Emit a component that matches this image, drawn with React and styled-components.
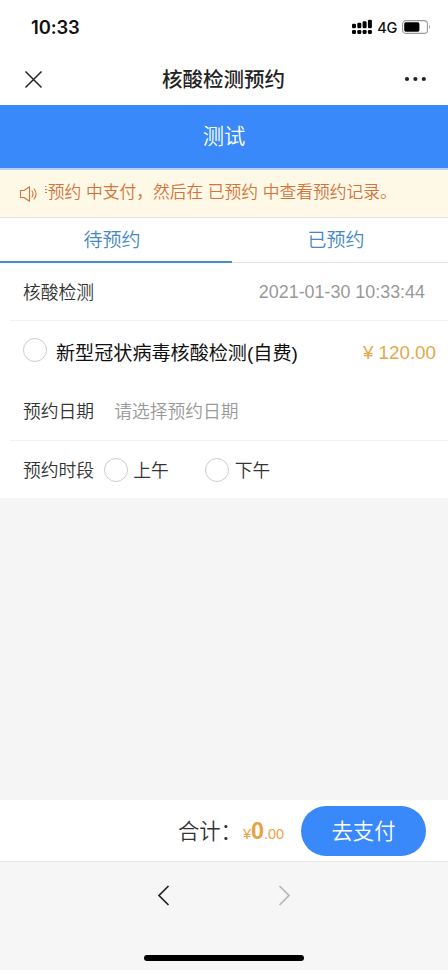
import styled, { createGlobalStyle } from 'styled-components'

const GlobalStyle = createGlobalStyle`
    * {
        box-sizing: border-box;
    }

    body {
        margin: 0;
        background: #f6f6f6;
        font-family: "Liberation Sans", "Noto Sans CJK SC", sans-serif;
        color: #333;
    }

    svg {
        display: block;
        flex: none;
    }
`

const Pagina = styled.div`
    display: flex;
    flex-direction: column;
    width: 448px;
    height: 970px;
    overflow: hidden;
    white-space: nowrap;
`

const StatusBar = styled.div`
    display: flex;
    align-items: center;
    height: 53px;
    padding: 1px 17px 0 31px;
    background: #fff;
    color: #111;
`

const Hora = styled.span`
    flex: 1;
    font: 600 18.4px/24px Inter, sans-serif;
    letter-spacing: -0.1px;
`

const Red = styled.span`
    margin: 1px 5px 0 5px;
    font: 500 14.5px/20px Inter, sans-serif;
    letter-spacing: -0.3px;
`

const NavBar = styled.header`
    display: grid;
    grid-template-columns: 54px 1fr 60px;
    align-items: center;
    height: 52px;
    padding: 0 10px 0 15px;
    background: #fff;
`

const NavTitulo = styled.h1`
    margin: 0;
    padding-top: 2px;
    font-size: 20.5px;
    font-weight: 500;
    line-height: 30px;
    text-align: center;
    color: #222;
`

const NavLado = styled.div`
    display: flex;
    justify-content: ${({ $fin }) => ($fin ? 'flex-end' : 'flex-start')};
    padding: ${({ $fin }) => ($fin ? '0 11px 0 0' : '0 0 0 9px')};
`

const Banner = styled.div`
    height: 65px;
    border-bottom: 2px solid #b5d0f0;
    background: #3989fb;
    color: #fff;
    font-size: 21.3px;
    font-weight: 350;
    line-height: 65px;
    text-align: center;
`

const Aviso = styled.div`
    display: flex;
    align-items: center;
    height: 47px;
    padding: 0 12px 0 19px;
    background: #fef8e6;
    color: #d3743b;
`

const AvisoVentana = styled.div`
    flex: 1;
    margin-left: 7px;
    overflow: hidden;
    font-size: 16.75px;
    font-weight: 350;
    line-height: 40px;
    margin-top: -2px;
`

const AvisoTexto = styled.div`
    margin-left: -14px;
`

const Tabs = styled.div`
    display: flex;
    height: 46px;
    border-top: 1px solid #e6e6e6;
    border-bottom: 1px solid #e2e4e6;
    background: #fff;
`

const Tab = styled.div`
    flex: 1;
    color: #4388c8;
    font-size: 19px;
    font-weight: 350;
    line-height: 46px;
    text-align: center;
`

const TabLinea = styled.div`
    width: 232px;
    height: 2px;
    margin-top: -2px;
    background: #4690cb;
    z-index: 1;
`

const Celda = styled.div`
    display: flex;
    align-items: center;
    height: ${({ $alto }) => $alto}px;
    padding: 0 22px 0 23px;
    background: #fff;
    font-size: 17.8px;
    font-weight: 350;
`

const Texto = styled.span`
    padding-bottom: 2px;
`

const Separador = styled.div`
    height: 1px;
    background: linear-gradient(to right, #fff 10px, #f1f1f1 10px);
`

const Fecha = styled.span`
    margin: 1px 1px 0 auto;
    color: #999;
    font-size: 17.9px;
`

const Radio = styled.span`
    flex: none;
    width: 24px;
    height: 24px;
    margin: ${({ $margen }) => $margen || '0'};
    border: 1.5px solid #ccc;
    border-radius: 50%;
    background: #fff;
`

const Producto = styled.span`
    color: #111;
    font-size: 19.1px;
    font-weight: 400;
    margin-top: 1px;
`

const Precio = styled.span`
    margin: 2px -10px 0 auto;
    color: #e3a94c;
    font-size: 18.8px;
`

const Placeholder = styled.span`
    margin-left: 20px;
    padding-bottom: 2px;
    color: #999;
`

const Relleno = styled.div`
    height: 302px;
    background: #f5f5f5;
`

const BarraPago = styled.div`
    display: flex;
    align-items: center;
    justify-content: flex-end;
    height: 61px;
    padding: 1px 22px 0 0;
    background: #fff;
`

const TotalLabel = styled.span`
    margin-right: 1px;
    padding-bottom: 3px;
    font-size: 21.3px;
    font-weight: 350;
`

const Total = styled.span`
    margin: 0 17px 0 0;
    color: #e9a144;
    font-size: 14.4px;

    b {
        font-size: 23.5px;
        font-weight: 700;
    }
`

const BotonPagar = styled.button`
    width: 125px;
    height: 50px;
    padding: 0 0 4px;
    border: 0;
    border-radius: 25px;
    background: #3989fb;
    color: #fff;
    font-family: inherit;
    font-size: 21.3px;
    font-weight: 350;
`

const Navegador = styled.footer`
    display: flex;
    flex-direction: column;
    align-items: center;
    justify-content: space-between;
    height: 109px;
    padding: 23px 0 9px;
    border-top: 1px solid #e8e8e8;
    background: #f6f6f6;
`

const Flechas = styled.div`
    display: flex;
    gap: 108px;
`

const Indicador = styled.div`
    width: 160px;
    height: 6px;
    border-radius: 3px;
    background: #000;
`

// alturas de las cuatro barras de señal
const senal = [4.5, 5.5, 7, 8.5]

const Senal = () => (
    <svg width="20" height="16" viewBox="0 0 20 16" fill="#000">
        {senal.map((alto, i) => (
            <g key={alto}>
                <rect x={i * 5.3} y={9.3 - alto} width="4" height={alto} rx="1.3" />
                <rect x={i * 5.3} y="11" width="4" height="4" rx="1.3" />
            </g>
        ))}
    </svg>
)

const Bateria = () => (
    <svg width="29" height="14" viewBox="0 0 29 14">
        <rect x="0.6" y="0.6" width="24.8" height="12.8" rx="3.2" fill="none" stroke="#999" strokeWidth="1.1" />
        <rect x="2.2" y="2.3" width="15.2" height="9.4" rx="1.6" fill="#000" />
        <path d="M27 4.8c1.3.5 1.3 3.9 0 4.4z" fill="#aaa" />
    </svg>
)

const Altavoz = () => (
    <svg width="19" height="18" viewBox="0 0 19 18" fill="none" stroke="#d3743b" strokeWidth="1.1">
        <path d="M1.5 5.5H5L10.5 1.7V16.3L5 12.5H1.5Z" strokeLinejoin="round" />
        <path d="M13 6Q15 9 13 12M15.2 4Q19 9 15.2 14" strokeLinecap="round" />
    </svg>
)

const App = () => {

    return (
        <>
            <GlobalStyle />
            <Pagina>
                <StatusBar>
                    <Hora>10:33</Hora>
                    <Senal />
                    <Red>4G</Red>
                    <Bateria />
                </StatusBar>
                <NavBar>
                    <NavLado>
                        <svg width="19" height="19" viewBox="0 0 19 19" stroke="#222" strokeWidth="1.5">
                            <path d="M1.5 1.5L17.5 17.5M17.5 1.5L1.5 17.5" />
                        </svg>
                    </NavLado>
                    <NavTitulo>核酸检测预约</NavTitulo>
                    <NavLado $fin>
                        <svg width="23" height="6" viewBox="0 0 23 6" fill="#222">
                            <circle cx="3" cy="3" r="2.1" />
                            <circle cx="11.4" cy="3" r="2.1" />
                            <circle cx="19.8" cy="3" r="2.1" />
                        </svg>
                    </NavLado>
                </NavBar>
                <Banner>测试</Banner>
                <Aviso>
                    <Altavoz />
                    <AvisoVentana>
                        <AvisoTexto>待预约 中支付，然后在 已预约 中查看预约记录。</AvisoTexto>
                    </AvisoVentana>
                </Aviso>
                <Tabs>
                    <Tab>待预约</Tab>
                    <Tab>已预约</Tab>
                </Tabs>
                <TabLinea />
                <Celda $alto={57}>
                    <Texto>核酸检测</Texto>
                    <Fecha>2021-01-30 10:33:44</Fecha>
                </Celda>
                <Separador />
                <Celda $alto={61}>
                    <Radio $margen="-4px 9px 0 0" />
                    <Producto>新型冠状病毒核酸检测(自费)</Producto>
                    <Precio>¥ 120.00</Precio>
                </Celda>
                <Celda $alto={58}>
                    <Texto>预约日期</Texto>
                    <Placeholder>请选择预约日期</Placeholder>
                </Celda>
                <Separador />
                <Celda $alto={57}>
                    <Texto>预约时段</Texto>
                    <Radio $margen="0 5px 0 10px" />
                    <Texto>上午</Texto>
                    <Radio $margen="0 6px 0 36px" />
                    <Texto>下午</Texto>
                </Celda>
                <Relleno />
                <BarraPago>
                    <TotalLabel>合计：</TotalLabel>
                    <Total>¥<b>0</b>.00</Total>
                    <BotonPagar type="button">去支付</BotonPagar>
                </BarraPago>
                <Navegador>
                    <Flechas>
                        <svg width="13" height="21" viewBox="0 0 13 21" fill="none" stroke="#222" strokeWidth="1.7">
                            <path d="M11.5 1L2 10.5L11.5 20" />
                        </svg>
                        <svg width="13" height="21" viewBox="0 0 13 21" fill="none" stroke="#b5b5b5" strokeWidth="1.7">
                            <path d="M1.5 1L11 10.5L1.5 20" />
                        </svg>
                    </Flechas>
                    <Indicador />
                </Navegador>
            </Pagina>
        </>
    )
}

export default App
